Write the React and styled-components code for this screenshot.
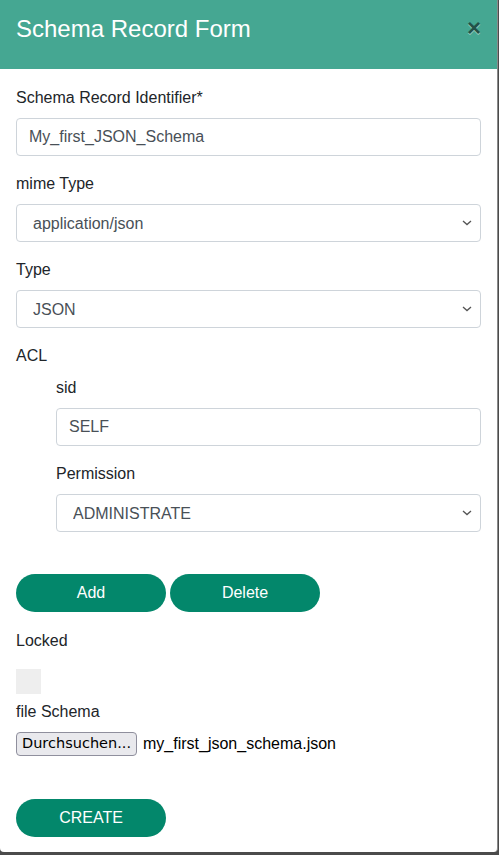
import React, { useState } from "react";
import styled, { createGlobalStyle } from "styled-components";

const GlobalStyle = createGlobalStyle`
  html, body {
    margin: 0;
    padding: 0;
    background: #4b4b4b;
  }
  body {
    font-family: "Liberation Sans", Arial, sans-serif;
    font-size: 16px;
    line-height: 1.5;
    color: #212529;
  }
  * {
    box-sizing: border-box;
  }
`;

const chevron =
  "data:image/svg+xml;utf8," +
  encodeURIComponent(
    "<svg xmlns='http://www.w3.org/2000/svg' width='10' height='6' viewBox='0 0 10 6'><path d='M1 1l4 3.6L9 1' fill='none' stroke='#555' stroke-width='1.3'/></svg>"
  );

const Page = styled.div`
  width: 499px;
  height: 855px;
  overflow: hidden;
  background: #4b4b4b;
`;

const Modal = styled.div`
  width: 498px;
  height: 852px;
  overflow: hidden;
  background: #fff;
  border-right: 1px solid #8a8a8a;
  border-radius: 0 0 4px 4px;
  display: flex;
  flex-direction: column;
`;

const Header = styled.div`
  flex-shrink: 0;
  height: 69px;
  background: #45a792;
  display: flex;
  align-items: flex-start;
  justify-content: space-between;
  padding: 11px 16px 0;
`;

const Title = styled.h5`
  margin: 0;
  font-size: 24px;
  font-weight: 400;
  line-height: 36px;
  color: #fff;
`;

const Close = styled.button`
  border: 0;
  background: transparent;
  padding: 0;
  margin-top: 5px;
  font-family: "Liberation Sans", Arial, sans-serif;
  font-size: 24px;
  font-weight: 700;
  line-height: 1;
  color: #000;
  opacity: 0.5;
  text-shadow: 0 1px 0 #fff;
  cursor: pointer;
`;

const Body = styled.form`
  flex-shrink: 0;
  padding: 17px 16px 16px;
  display: flex;
  flex-direction: column;
`;

const Group = styled.div`
  margin-bottom: ${(p) => p.mb ?? 16}px;
  padding-left: ${(p) => (p.indent ? 40 : 0)}px;
`;

const Label = styled.label`
  display: block;
  margin-bottom: 8px;
  line-height: 24px;
`;

const Input = styled.input`
  display: block;
  width: 100%;
  height: 38px;
  padding: 6px 12px;
  font-family: "Liberation Sans", Arial, sans-serif;
  font-size: 16px;
  color: #495057;
  background: #fff;
  border: 1px solid #ced4da;
  border-radius: 4px;
  outline: none;
`;

const Select = styled.select`
  display: block;
  width: 100%;
  height: 38px;
  padding: 6px 28px 6px 16px;
  font-family: "Liberation Sans", Arial, sans-serif;
  font-size: 16px;
  color: #495057;
  background: #fff url("${chevron}") no-repeat right 8px center / 10px 6px;
  border: 1px solid #ced4da;
  border-radius: 4px;
  outline: none;
  appearance: none;
  -webkit-appearance: none;
`;

const ButtonRow = styled.div`
  display: flex;
  gap: 4px;
  margin-top: 42px;
  margin-bottom: 17px;
`;

const PillButton = styled.button`
  width: 150px;
  height: 38px;
  border: 0;
  border-radius: 19px;
  background: #03876b;
  color: #fff;
  font-family: "Liberation Sans", Arial, sans-serif;
  font-size: 16px;
  text-transform: ${(p) => (p.upper ? "uppercase" : "none")};
  cursor: pointer;
`;

const Check = styled.span`
  display: block;
  width: 25px;
  height: 25px;
  background: #eee;
  margin-top: 8px;
  margin-bottom: 6px;
  cursor: pointer;
`;

const FileRow = styled.div`
  display: flex;
  align-items: center;
  gap: 6px;
  margin-bottom: 43px;
`;

const FileButton = styled.span`
  display: inline-flex;
  align-items: center;
  height: 24px;
  padding: 0 5px;
  border: 1px solid #8f8f9d;
  border-radius: 4px;
  background: #e9e9ed;
  font-family: "DejaVu Sans", sans-serif;
  font-size: 14.5px;
  color: #000;
`;

const FileName = styled.span`
  font-size: 16px;
  color: #000;
`;

export default function App() {
  const [locked, setLocked] = useState(false);

  return (
    <Page>
      <GlobalStyle />
      <Modal>
        <Header>
          <Title>Schema Record Form</Title>
          <Close type="button">×</Close>
        </Header>
        <Body onSubmit={(e) => e.preventDefault()}>
          <Group>
            <Label>Schema Record Identifier*</Label>
            <Input defaultValue="My_first_JSON_Schema" />
          </Group>
          <Group>
            <Label>mime Type</Label>
            <Select defaultValue="application/json">
              <option>application/json</option>
              <option>application/xml</option>
            </Select>
          </Group>
          <Group>
            <Label>Type</Label>
            <Select defaultValue="JSON">
              <option>JSON</option>
              <option>XML</option>
            </Select>
          </Group>
          <Label>ACL</Label>
          <Group indent>
            <Label>sid</Label>
            <Input defaultValue="SELF" />
          </Group>
          <Group indent mb={0}>
            <Label>Permission</Label>
            <Select defaultValue="ADMINISTRATE">
              <option>READ</option>
              <option>WRITE</option>
              <option>ADMINISTRATE</option>
            </Select>
          </Group>
          <ButtonRow>
            <PillButton type="button">Add</PillButton>
            <PillButton type="button">Delete</PillButton>
          </ButtonRow>
          <Label>Locked</Label>
          <Check
            style={{ background: locked ? "#03876b" : undefined }}
            onClick={() => setLocked(!locked)}
          />
          <Label>file Schema</Label>
          <FileRow>
            <FileButton>Durchsuchen...</FileButton>
            <FileName>my_first_json_schema.json</FileName>
          </FileRow>
          <div>
            <PillButton type="submit" upper>
              Create
            </PillButton>
          </div>
        </Body>
      </Modal>
    </Page>
  );
}
